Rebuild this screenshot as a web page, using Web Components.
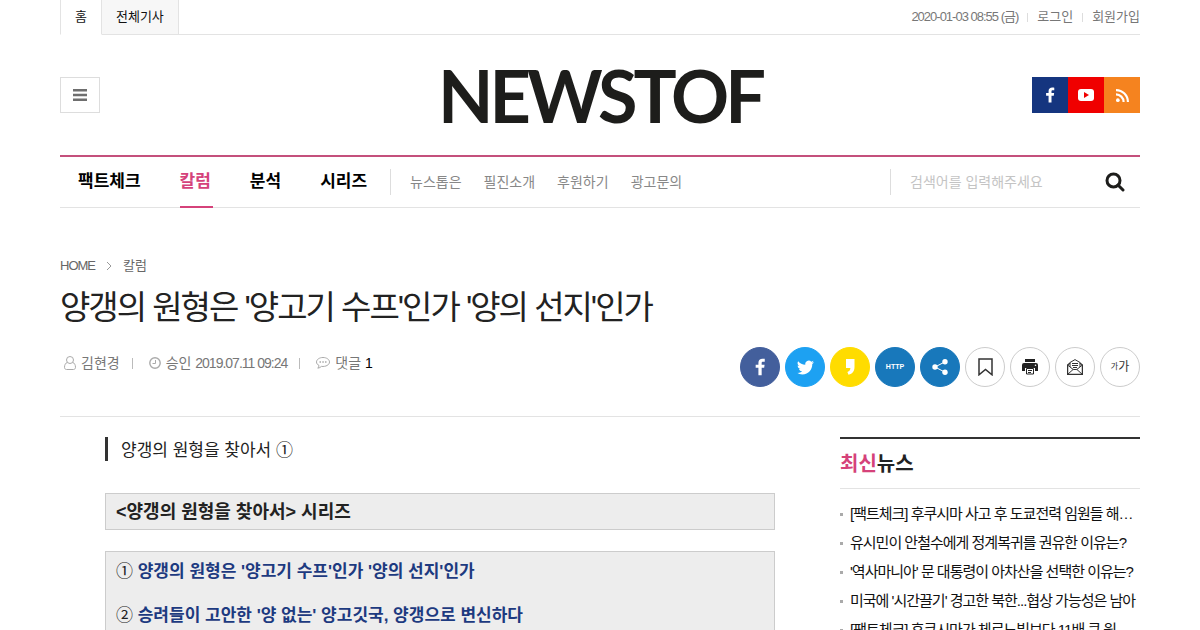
<!DOCTYPE html>
<html lang="ko">
<head>
<meta charset="utf-8">
<meta name="viewport" content="width=device-width, initial-scale=1">
<title>양갱의 원형은 '양고기 수프'인가 '양의 선지'인가 - NEWSTOF</title>
<style>
  :root {
    --pink: #d5427a;
    --ink: #222;
    --muted: #777;
    --line: #e3e3e3;
    --navy: #1d3a80;
  }
  body {
    margin: 0;
    background: #fff;
    color: var(--ink);
    font: 14px/20px "Liberation Sans", "Noto Sans CJK KR", sans-serif;
  }
</style>
</head>
<body>
<news-page></news-page>
<script>
const base = `
  * { box-sizing: border-box; }
  a { color: inherit; text-decoration: none; }
  ul { list-style: none; margin: 0; padding: 0; }
  svg { display: block; }
`;

function define(name, css, html) {
  const template = document.createElement('template');
  template.innerHTML = `<style>${base}${css}</style>${html}`;
  customElements.define(name, class extends HTMLElement {
    constructor() {
      super();
      this.attachShadow({ mode: 'open' }).append(template.content.cloneNode(true));
    }
  });
}

const facebook = '<path d="M14 22v-9h3l.5-3.600H14V7.400c0-1.100.4-1.700 1.800-1.700h1.900V2.200C17.300 2.100 16.200 2 15 2c-2.900 0-4.900 1.700-4.900 4.800v2.600H6.800V13h3.300v9z"/>';

define('top-bar', `
  :host { display: flex; justify-content: space-between; height: 35px; border-bottom: 1px solid var(--line); font-size: 13px; line-height: 34px; }
  nav { display: flex; height: 35px; color: #111; }
  nav a { padding: 0 14px; border-right: 1px solid var(--line); background: #f7f7f7; border-bottom: 1px solid var(--line); }
  nav a:first-child { border-left: 1px solid var(--line); background: #fff; border-bottom-color: #fff; }
  ul { display: flex; color: var(--muted); }
  li { display: flex; align-items: center; }
  li + li::before { content: ""; width: 1px; height: 9px; margin: 0 9px; background: #ddd; }
  time { letter-spacing: -1px; }
`, `
  <nav><a href="#">홈</a><a href="#">전체기사</a></nav>
  <ul>
    <li><time datetime="2020-01-03T08:55">2020-01-03 08:55 (금)</time></li>
    <li><a href="#">로그인</a></li>
    <li><a href="#">회원가입</a></li>
  </ul>
`);

define('site-header', `
  :host { display: grid; grid-template-columns: 1fr auto 1fr; align-items: center; height: 120px; }
  button { display: grid; place-items: center; width: 40px; height: 36px; padding: 0; border: 1px solid #ddd; background: #fff; }
  .logo { font: 700 72px/80px Lato, sans-serif; letter-spacing: -4px; color: #1d1d1b; }
  ul { display: flex; justify-self: end; }
  li a { display: grid; place-items: center; width: 36px; height: 36px; background: #15357f; }
  li:nth-child(2) a { background: #f00000; }
  li:nth-child(3) a { background: #f5831f; }
`, `
  <button type="button" aria-label="전체메뉴"><svg width="14" height="12" fill="#6e6e6e"><path d="M0 0h14v2.500H0zM0 4.800h14v2.500H0zM0 9.500h14V12H0z"/></svg></button>
  <a class="logo" href="#">NEWSTOF</a>
  <ul>
    <li><a href="#" aria-label="페이스북"><svg width="18" height="18" viewBox="0 0 24 24" fill="#fff">${facebook}</svg></a></li>
    <li><a href="#" aria-label="유튜브"><svg width="16" height="12" viewBox="0 0 16 12"><rect width="16" height="12" rx="3" fill="#fff"/><path d="M6 3l5 3-5 3z" fill="#f00000"/></svg></a></li>
    <li><a href="#" aria-label="RSS"><svg width="13" height="13" viewBox="0 0 12 12" fill="none" stroke="#fff" stroke-width="2"><circle cx="1.700" cy="10.300" r="1.700" fill="#fff" stroke="none"/><path d="M0 5a7 7 0 0 1 7 7M0 1a11 11 0 0 1 11 11"/></svg></a></li>
  </ul>
`);

define('main-nav', `
  :host { display: flex; height: 53px; border-top: 2px solid #c4507c; border-bottom: 1px solid var(--line); }
  .main { display: flex; gap: 37px; padding: 0 21px 0 18px; font-size: 17px; font-weight: 700; line-height: 50px; color: #000; }
  .main a { display: block; height: 51px; padding-right: 2px; }
  .main a[aria-current] { color: var(--pink); border-bottom: 2px solid var(--pink); }
  .sub, form { display: flex; align-items: center; }
  .sub { gap: 22px; color: #888; }
  .sub::before, form::before { content: ""; width: 1px; height: 26px; background: #ddd; }
  .sub::before { margin-right: -3px; }
  form { width: 250px; margin-left: auto; }
  input { flex: 1; min-width: 0; height: 40px; padding: 0 0 0 19px; border: 0; outline: 0; background: none; font: inherit; }
  input::placeholder { color: #c4c4c4; }
  button { display: grid; place-items: center; width: 50px; height: 50px; padding: 0; border: 0; background: none; }
`, `
  <ul class="main">
    <li><a href="#">팩트체크</a></li>
    <li><a href="#" aria-current="page">칼럼</a></li>
    <li><a href="#">분석</a></li>
    <li><a href="#">시리즈</a></li>
  </ul>
  <ul class="sub">
    <li><a href="#">뉴스톱은</a></li>
    <li><a href="#">필진소개</a></li>
    <li><a href="#">후원하기</a></li>
    <li><a href="#">광고문의</a></li>
  </ul>
  <form role="search">
    <input type="text" aria-label="검색어" placeholder="검색어를 입력해주세요">
    <button type="button" aria-label="검색"><svg width="20" height="20" viewBox="0 0 20 20" fill="none" stroke="#1d1d1b" stroke-width="3"><circle cx="8.500" cy="8.500" r="6.500"/><path d="M13 13l5 5" stroke-linecap="round"/></svg></button>
  </form>
`);

define('share-button', `
  :host { display: block; }
  button { display: flex; justify-content: center; align-items: center; width: 40px; height: 40px; padding: 0; border: 1px solid var(--edge, var(--fill)); border-radius: 50%; background: var(--fill, #fff); color: inherit; font: inherit; }
`, `<button type="button"><slot></slot></button>`);

define('article-head', `
  :host { display: block; padding-top: 48px; border-bottom: 1px solid var(--line); }
  .crumbs { display: flex; align-items: center; gap: 11px; font-size: 13px; color: #666; }
  .crumbs a:first-child { letter-spacing: -1px; }
  h1 { margin: 10px 0 17px; font-size: 33px; line-height: 44px; font-weight: 400; letter-spacing: -2px; }
  .row { display: flex; justify-content: space-between; align-items: flex-start; padding-bottom: 29px; }
  .meta { display: flex; align-items: center; height: 32px; padding-left: 4px; color: var(--muted); }
  .meta li { display: flex; align-items: center; gap: 5px; }
  .meta li + li::before { content: ""; width: 1px; height: 11px; margin: 0 11px 0 12px; background: #bbb; }
  .meta time { letter-spacing: -1px; }
  .meta b { font-weight: 400; color: #000; }
  .share { display: flex; gap: 5px; }
  .fb { --fill: #435f9c; }
  .tw { --fill: #1da1f2; }
  .ks { --fill: #ffdc00; }
  .url, .more { --fill: #1878bb; }
  .url { color: #fff; font-size: 7px; font-weight: 700; line-height: 8px; }
  .line { --edge: #ccc; color: #333; }
  .small { font-size: 8px; line-height: 14px; }
  .large { font-size: 12px; line-height: 14px; }
`, `
  <nav class="crumbs"><a href="#">HOME</a><svg width="6" height="10" viewBox="0 0 6 10" fill="none" stroke="#999"><path d="M1 1l4 4-4 4"/></svg><a href="#">칼럼</a></nav>
  <h1>양갱의 원형은 '양고기 수프'인가 '양의 선지'인가</h1>
  <div class="row">
    <ul class="meta">
      <li><svg width="12" height="14" viewBox="0 0 12 14" fill="none" stroke="#aaa"><circle cx="6" cy="4" r="3.500"/><path d="M3.300 6.400C1.500 7 .5 9 .5 11.300c0 1.400.9 2.200 2 2.200h7c1.100 0 2-.8 2-2.200 0-2.300-1-4.300-2.800-4.900"/></svg>김현경</li>
      <li><svg width="12" height="12" viewBox="0 0 12 12" fill="none" stroke="#aaa"><circle cx="6" cy="6" r="5.200" stroke-width="1.400"/><path d="M6.500 3v3.500h-3"/></svg><span>승인 <time datetime="2019-07-11T09:24">2019.07.11 09:24</time></span></li>
      <li><svg width="14" height="12" viewBox="0 0 14 12" fill="none" stroke="#aaa"><path d="M7 .5C3.400.5.5 2.500.5 5c0 1.500 1 2.700 2.500 3.500 0 1-.5 1.900-1.200 2.700 1.600-.2 2.700-.9 3.600-1.800 4.500.5 8.100-1.600 8.100-4.400C13.500 2.500 10.600.5 7 .5z"/><path d="M3.500 5H5M6.300 5h1.500M9 5h1.500" stroke-width="1.500"/></svg><span>댓글 <b>1</b></span></li>
    </ul>
    <div class="share">
      <share-button class="fb"><svg width="20" height="20" viewBox="0 0 24 24" fill="#fff">${facebook}</svg></share-button>
      <share-button class="tw"><svg width="17" height="17" viewBox="0 0 24 24" fill="#fff"><path d="M23.950 4.570a10 10 0 0 1-2.820.77 4.960 4.960 0 0 0 2.160-2.720c-.95.55-2 .95-3.130 1.190a4.920 4.920 0 0 0-8.380 4.480C7.690 8.100 4.070 6.130 1.640 3.160a4.920 4.920 0 0 0 1.520 6.570 4.900 4.900 0 0 1-2.230-.61v.06a4.920 4.920 0 0 0 3.950 4.830 5 5 0 0 1-2.210.08 4.940 4.940 0 0 0 4.600 3.420A9.870 9.870 0 0 1 0 19.540a14 14 0 0 0 7.550 2.210c9.050 0 14-7.500 14-13.980l-.02-.64a9.900 9.900 0 0 0 2.420-2.560z"/></svg></share-button>
      <share-button class="ks"><svg width="10" height="16" viewBox="0 0 10 16" fill="#fff"><path d="M1 0h8.500v8c0 4-2 6.700-6 7.700L2.400 13C4.400 12.200 5.400 11 5.400 9H1z"/></svg></share-button>
      <share-button class="url">HTTP</share-button>
      <share-button class="more"><svg width="16" height="16" viewBox="0 0 16 16" fill="#fff"><circle cx="3" cy="8" r="2.700"/><circle cx="13" cy="2.800" r="2.700"/><circle cx="13" cy="13.200" r="2.700"/><path d="M13 2.800L3 8l10 5.200" fill="none" stroke="#fff"/></svg></share-button>
      <share-button class="line"><svg width="15" height="18" viewBox="0 0 15 18" fill="none" stroke="#333" stroke-width="1.500"><path d="M1 1h13v15.800l-6.500-5.300L1 16.800z"/></svg></share-button>
      <share-button class="line"><svg width="16" height="16" viewBox="0 0 16 16" fill="#222"><path d="M3 0h10v3H3zM2 4h12a2 2 0 0 1 2 2v6h-3V9H3v3H0V6a2 2 0 0 1 2-2z"/><path d="M4.500 9.500h7V15h-7z" fill="#fff" stroke="#222"/><path d="M6 11.500h4M6 13.500h3" stroke="#222"/><circle cx="13.500" cy="6.300" r=".8" fill="#fff"/></svg></share-button>
      <share-button class="line"><svg width="16" height="16" viewBox="0 0 16 16" fill="none" stroke="#333"><path d="M3 4L.6 6v9.400h14.800V6L13 4" stroke-width="1.300"/><path d="M3 8V3.500L8 .6l5 2.900V8"/><path d="M.6 6l5.600 4.500h3.600L15.400 6M.6 15.400l5.600-5M15.400 15.400l-5.600-5M5 4.500h6M5 6.500h6M6 8.500h4"/></svg></share-button>
      <share-button class="line"><span class="small">가</span><span class="large">가</span></share-button>
    </div>
  </div>
`);

define('article-body', `
  :host { display: block; padding: 0 65px 0 45px; font-size: 17px; }
  h2 { margin: 0 0 32px; padding: 4px 0 0 13px; border-left: 3px solid #333; font-size: 17px; line-height: 20px; font-weight: 400; }
  .box { margin-bottom: 21px; padding: 7px 10px; border: 1px solid #ccc; background: #ededed; line-height: 26px; }
  .title { padding: 5px 10px 4px; font-size: 18px; font-weight: 700; }
  p { margin: 0 0 18px; }
  p:last-child { margin: 0; }
  a { font-weight: 700; color: var(--navy); }
`, `
  <h2>양갱의 원형을 찾아서 ①</h2>
  <div class="box title">&lt;양갱의 원형을 찾아서&gt; 시리즈</div>
  <div class="box">
    <p>① <a href="#">양갱의 원형은 '양고기 수프'인가 '양의 선지'인가</a></p>
    <p>② <a href="#">승려들이 고안한 '양 없는' 양고깃국, 양갱으로 변신하다</a></p>
  </div>
`);

define('latest-news', `
  :host { display: block; border-top: 2px solid #333; }
  h2 { margin: 0; padding: 11px 0 10px; border-bottom: 1px solid var(--line); font-size: 20px; line-height: 28px; }
  em { font-style: normal; color: var(--pink); }
  ul { display: grid; gap: 9px; padding-top: 15px; color: #111; font-size: 15px; letter-spacing: -1px; }
  li { display: flex; align-items: center; gap: 7px; white-space: nowrap; }
  li::before { content: ""; flex: none; width: 3px; height: 3px; background: #aaa; }
`, `
  <h2><em>최신</em>뉴스</h2>
  <ul>
    <li><a href="#">[팩트체크] 후쿠시마 사고 후 도쿄전력 임원들 해…</a></li>
    <li><a href="#">유시민이 안철수에게 정계복귀를 권유한 이유는?</a></li>
    <li><a href="#">'역사마니아' 문 대통령이 아차산을 선택한 이유는?</a></li>
    <li><a href="#">미국에 '시간끌기' 경고한 북한...협상 가능성은 남아</a></li>
    <li><a href="#">[팩트체크] 후쿠시마가 체르노빌보다 11배 큰 원…</a></li>
  </ul>
`);

define('news-page', `
  :host { display: block; max-width: 1080px; margin: 0 auto; }
  main { display: grid; grid-template-columns: minmax(0, 1fr) 300px; padding-top: 20px; }
`, `
  <top-bar></top-bar>
  <site-header></site-header>
  <main-nav></main-nav>
  <article-head></article-head>
  <main><article-body></article-body><latest-news></latest-news></main>
`);
</script>
</body>
</html>
